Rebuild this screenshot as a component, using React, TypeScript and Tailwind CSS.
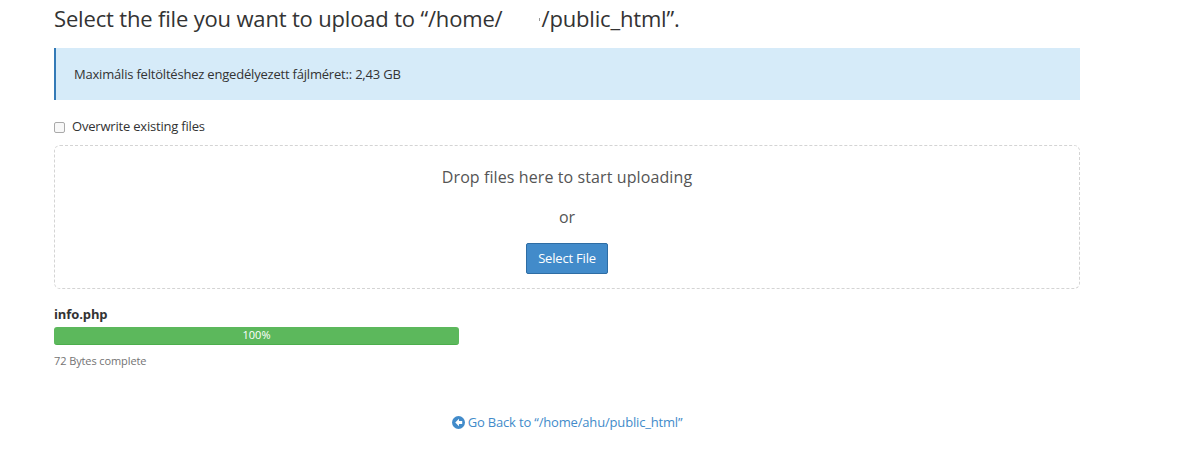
const font = { fontFamily: '"Open Sans", sans-serif' };

export default function App() {
  return (
    <div className="h-[465px] w-[1188px] overflow-hidden bg-white pl-[54px] text-[#333]" style={font}>
      <div className="w-[1026px]">
        <h1 className="h-[32px] pt-[4px] text-[22px] leading-[28px] tracking-[-0.17px] text-[#333]">
          Select the file you want to upload to “/home/
          <span className="inline-flex h-[28px] w-[39px] items-start justify-end align-top">
            <span className="mr-[2px] mt-[14px] h-[3px] w-px bg-[#999]" />
          </span>
          /public_html”.
        </h1>
        <div className="mt-[16px] flex h-[52px] items-center border-l-2 border-[#337ab7] bg-[#d6ebf9] pl-[18px] pt-[1px] text-[13px] tracking-[-0.2px] text-[#333]">
          Maximális feltöltéshez engedélyezett fájlméret:: 2,43 GB
        </div>
        <label className="mt-[18px] flex h-[18px] items-center gap-[7px] text-[13px] tracking-[-0.2px]">
          <input type="checkbox" className="h-[11px] w-[11px] appearance-none rounded-[2px] border border-[#aaa] bg-[#f8f8f8]" />
          Overwrite existing files
        </label>
        <div className="mt-[9px] flex h-[144px] flex-col items-center rounded-md border border-dashed border-[#d4d4d4]">
          <p className="mt-[20px] text-[16px] leading-[22px] tracking-[0.1px] text-[#555]">Drop files here to start uploading</p>
          <p className="mt-[18px] text-[16px] leading-[22px] text-[#555]">or</p>
          <button className="mt-[15px] h-[31px] w-[82px] rounded-[2px] border border-[#2e6da4] bg-[#428bca] text-[13px] tracking-[-0.2px] text-white">
            Select File
          </button>
        </div>
        <div className="mt-[15px] text-[13px] font-bold leading-[20px] tracking-[-0.1px] text-[#333]">info.php</div>
        <div className="mt-[3px] flex h-[18px] w-[405px] items-center justify-center rounded-[3px] border-b border-[#4cae4c] bg-[#5cb85c] text-[11px] text-white">
          100%
        </div>
        <div className="mt-[8px] text-[11px] leading-[16px] tracking-[-0.1px] text-[#737373]">72 Bytes complete</div>
        <div className="mt-[44px] flex items-center justify-center gap-[3px] text-[13px] tracking-[-0.17px] text-[#428bca]">
          <svg width="13" height="13" viewBox="0 0 14 14">
            <circle cx="7" cy="7" r="7" fill="#428bca" />
            <path d="M7.5 3 3.5 7l4 4V8.6H11V5.4H7.5z" fill="#fff" />
          </svg>
          <a href="#">Go Back to “/home/ahu/public_html”</a>
        </div>
      </div>
    </div>
  );
}
